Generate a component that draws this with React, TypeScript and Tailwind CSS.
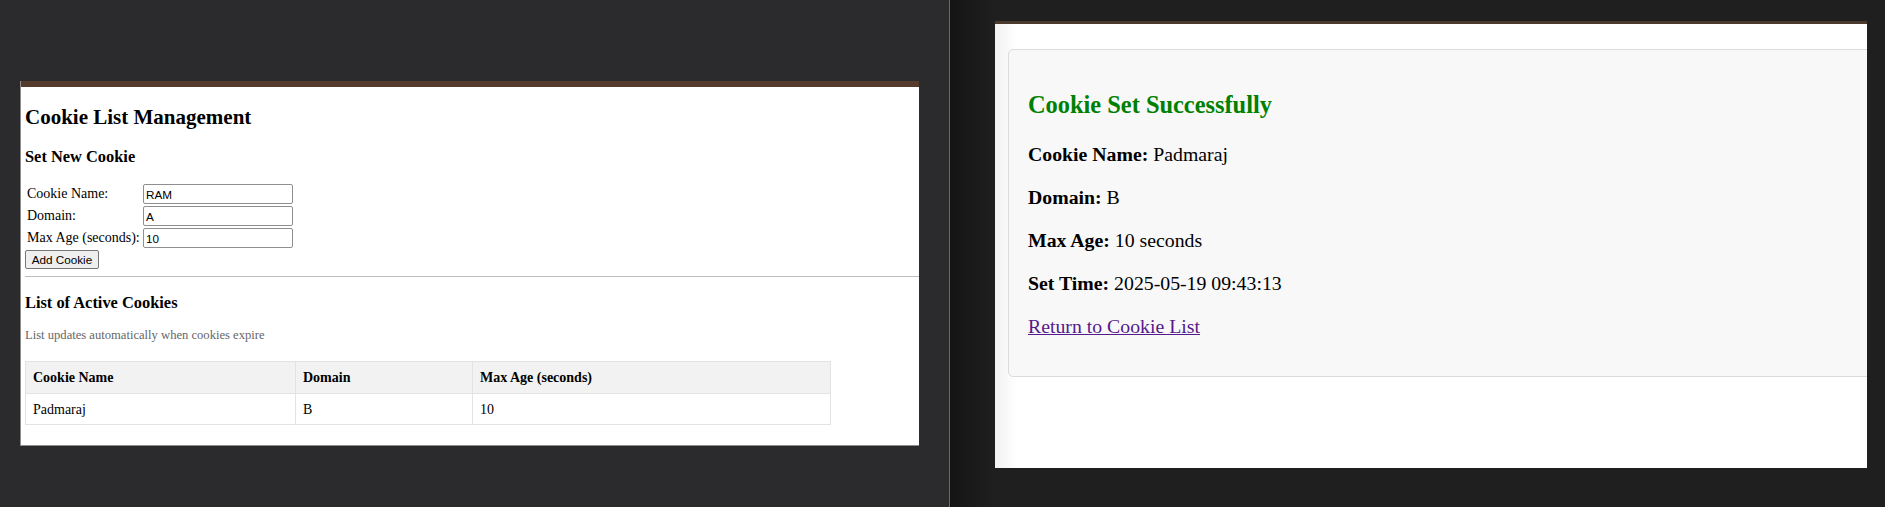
import React from "react";

type Cookie = { name: string; domain: string; maxAge: number };

const cookies: Cookie[] = [{ name: "Padmaraj", domain: "B", maxAge: 10 }];

const formRows = [
  { label: "Cookie Name:", value: "RAM" },
  { label: "Domain:", value: "A" },
  { label: "Max Age (seconds):", value: "10" },
];

function CookieListPage() {
  return (
    <div className="w-[899px] h-[365px] flex flex-col border-l border-b border-[#8c8c8c] bg-white overflow-hidden">
      <div className="h-[6px] bg-[#553b2c] shrink-0" />
      <div className="pl-[4px] text-[14px] text-black font-['Liberation_Serif',serif]">
        <h2 className="mt-[18px] text-[21px] leading-[24px] font-bold">Cookie List Management</h2>
        <h3 className="mt-[18px] text-[16.4px] leading-[19px] font-bold">Set New Cookie</h3>

        {/* Form */}
        <div className="mt-[17px] flex flex-col">
          {formRows.map((row) => (
            <div key={row.label} className="flex items-center h-[22px]">
              <span className="w-[118px] pl-[2px] leading-[16px]">{row.label}</span>
              <input
                readOnly
                value={row.value}
                className="w-[150px] h-[20px] px-[2px] border border-[#8f8f8f] rounded-[2px] bg-white text-[11.7px] font-['Liberation_Sans',sans-serif] outline-none"
              />
            </div>
          ))}
          <button className="mt-[1px] w-[74px] h-[19px] border border-[#767676] rounded-[2px] bg-[#efefef] text-[11.7px] leading-[17px] font-['Liberation_Sans',sans-serif] text-black">
            Add Cookie
          </button>
        </div>

        <div className="mt-[7px] border-t border-[#bdbdbd]" />

        <h3 className="mt-[16px] text-[16.4px] leading-[19px] font-bold">List of Active Cookies</h3>
        <p className="mt-[16px] text-[12.6px] leading-[15px] text-[#666666]">
          List updates automatically when cookies expire
        </p>

        {/* Table */}
        <table className="mt-[18px] w-[806px] border-collapse border border-[#e3e3e3] text-[14px]">
          <thead>
            <tr className="h-[32px] bg-[#f2f2f2]">
              <th className="w-[270px] px-[7px] text-left font-bold border border-[#e3e3e3]">Cookie Name</th>
              <th className="w-[177px] px-[7px] text-left font-bold border border-[#e3e3e3]">Domain</th>
              <th className="px-[7px] text-left font-bold border border-[#e3e3e3]">Max Age (seconds)</th>
            </tr>
          </thead>
          <tbody>
            {cookies.map((c) => (
              <tr key={c.name} className="h-[31px]">
                <td className="px-[7px] border border-[#e3e3e3]">{c.name}</td>
                <td className="px-[7px] border border-[#e3e3e3]">{c.domain}</td>
                <td className="px-[7px] border border-[#e3e3e3]">{c.maxAge}</td>
              </tr>
            ))}
          </tbody>
        </table>
      </div>
    </div>
  );
}

function SuccessPage() {
  const details = [
    { label: "Cookie Name:", value: "Padmaraj" },
    { label: "Domain:", value: "B" },
    { label: "Max Age:", value: "10 seconds" },
    { label: "Set Time:", value: "2025-05-19 09:43:13" },
  ];

  return (
    <div className="w-[872px] h-[447px] flex flex-col overflow-hidden bg-[linear-gradient(to_right,#f2f2f2,#ffffff_22px)]">
      <div className="h-[3px] bg-[#4a392d] shrink-0" />
      <div className="pl-[13px] pt-[25px] font-['Liberation_Serif',serif] text-black">
        <div className="w-[900px] rounded-[5px] border border-[#dcdcdc] bg-[#f8f8f8] pl-[19px] pt-[41px] pb-[38px]">
          <h2 className="text-[24.4px] leading-[28px] font-bold text-[#008000]">Cookie Set Successfully</h2>
          <div className="mt-[24px] flex flex-col gap-[20px] text-[19.8px] leading-[23px]">
            {details.map((d) => (
              <p key={d.label}>
                <strong>{d.label}</strong> {d.value}
              </p>
            ))}
            <p>
              <a href="#" className="text-[#551a8b] underline">
                Return to Cookie List
              </a>
            </p>
          </div>
        </div>
      </div>
    </div>
  );
}

function App() {
  return (
    <div className="w-[1885px] h-[507px] flex overflow-hidden">
      {/* Left screen */}
      <div className="w-[949px] h-full bg-[#2b2b2e] pl-[20px] pt-[81px] shrink-0">
        <CookieListPage />
      </div>
      <div className="w-[1px] h-full bg-[#6a6a6a] shrink-0" />
      {/* Right screen */}
      <div className="flex-1 h-full bg-[linear-gradient(to_right,#141414,#1f1f1f_45px)] pl-[45px] pt-[21px]">
        <SuccessPage />
      </div>
    </div>
  );
}

export default App;
